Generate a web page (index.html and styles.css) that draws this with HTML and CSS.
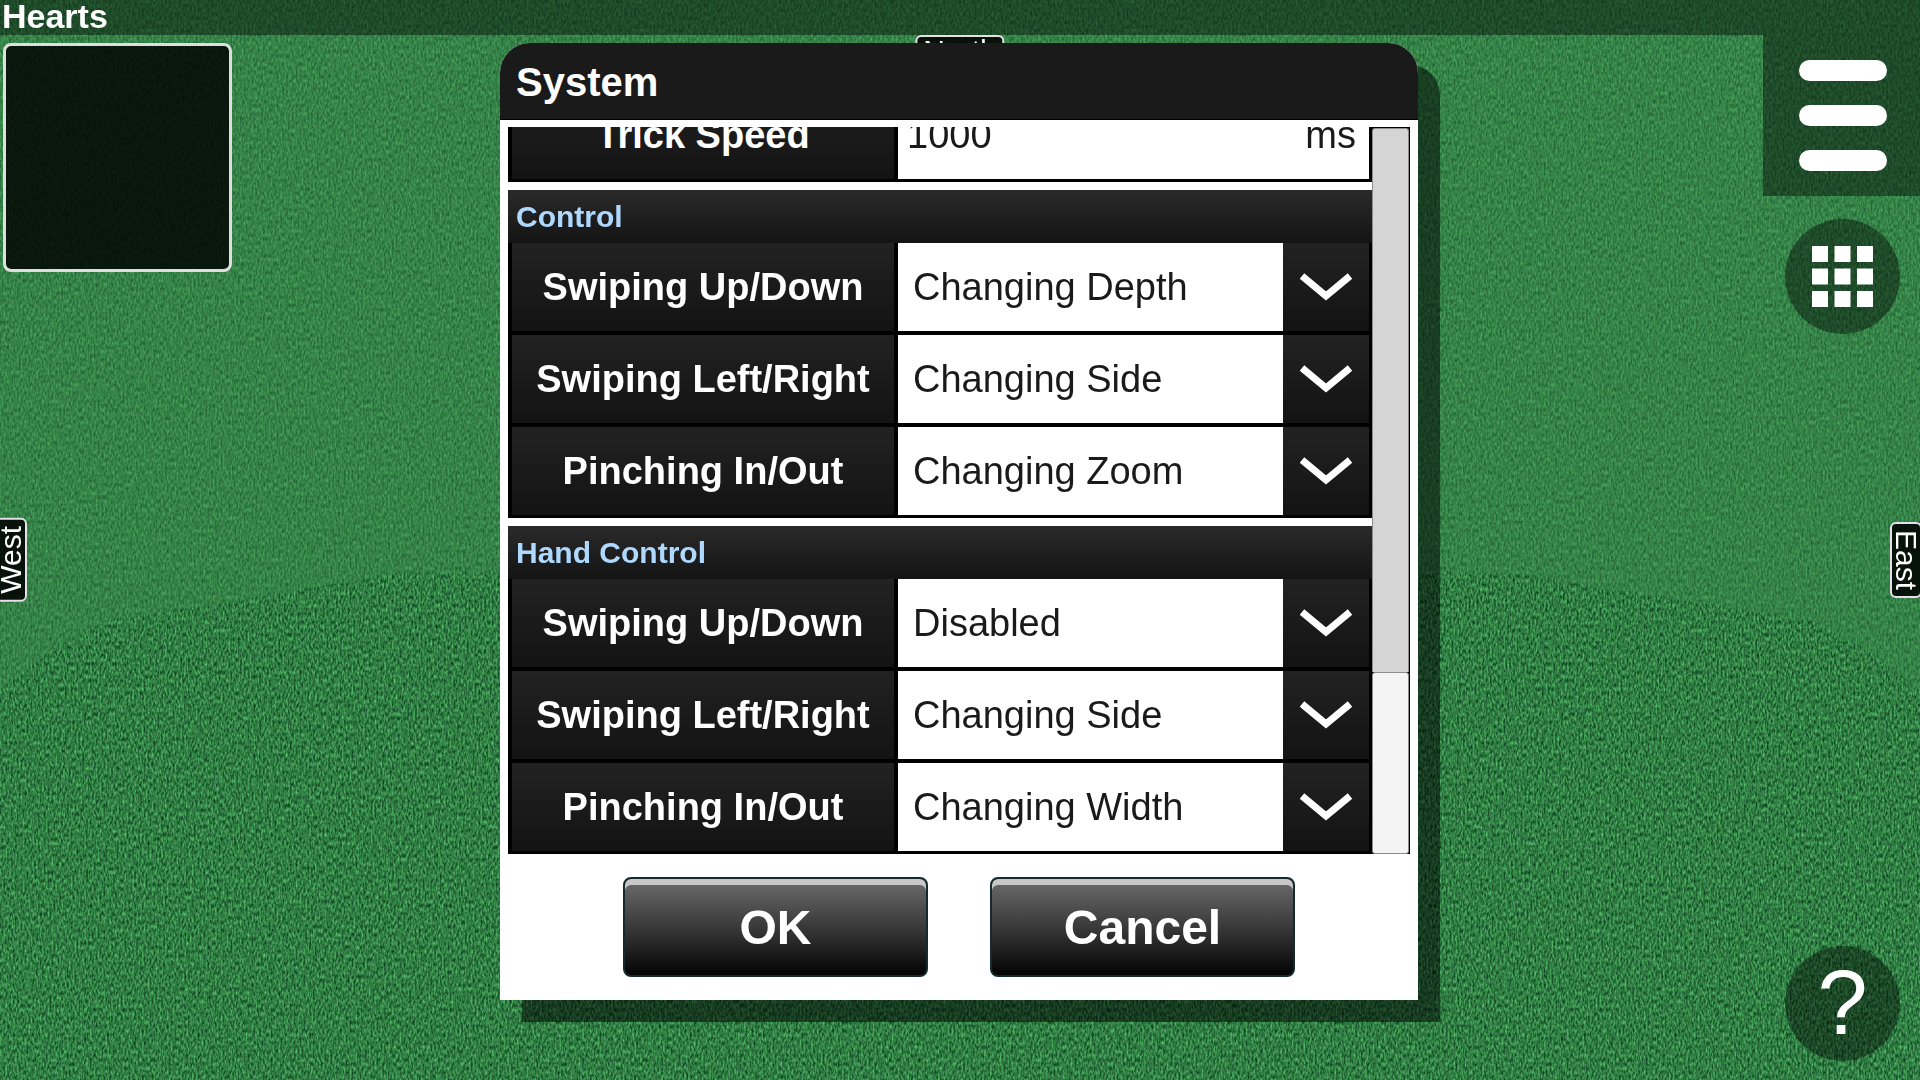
FILE: index.html
```html
<!DOCTYPE html>
<html lang="en">

<head>
    <meta charset="UTF-8">
    <meta name="viewport" content="width=device-width, initial-scale=1.0">
    <title>Hearts</title>
    <link rel="stylesheet" href="styles.css">
</head>

<body>
    <!-- felt -->
    <svg class="felt" viewBox="0 0 1920 1080" preserveAspectRatio="none" aria-hidden="true">
        <defs>
            <filter id="cloth" x="0" y="0" width="100%" height="100%" color-interpolation-filters="sRGB">
                <feTurbulence type="fractalNoise" baseFrequency="0.52 0.24" numOctaves="2" seed="4" />
                <feColorMatrix values="0.45 0 0 0 -0.035  0.75 0 0 0 0.115  0.45 0 0 0 0.04  0 0 0 0 1" />
            </filter>
        </defs>
        <rect width="1920" height="1080" filter="url(#cloth)" />
        <!-- far side of the cloth, paler and smoother -->
        <path fill="#3b8a4d" fill-opacity="0.45" d="M0 0H1920V690L1865 648L1810 620L1720 607L1620 590L1510 573L1400 572H500L400 573L300 590L200 607L110 620L55 648L0 690Z" />
    </svg>

    <header class="topbar">
        <h1>Hearts</h1>
    </header>

    <main class="table">
        <div class="trick-box"></div>
        <nav class="side">
            <button class="menu-btn" type="button" aria-label="Menu">
                <svg width="88" height="111" viewBox="0 0 88 111" fill="#fff">
                    <rect y="0" width="88" height="21" rx="10.5" />
                    <rect y="45" width="88" height="21" rx="10.5" />
                    <rect y="90" width="88" height="21" rx="10.5" />
                </svg>
            </button>
            <button class="round-btn" type="button" aria-label="Grid">
                <svg width="61" height="61" viewBox="0 0 61 61" fill="#fff">
                    <path d="M0 0h16v16H0zM22.500 0h16v16h-16zM45 0h16v16H45zM0 22.500h16v16H0zM22.500 22.500h16v16h-16zM45 22.500h16v16H45zM0 45h16v16H0zM22.500 45h16v16h-16zM45 45h16v16H45z" />
                </svg>
            </button>
            <button class="round-btn help" type="button">?</button>
        </nav>
    </main>

    <div class="seat north">North</div>
    <div class="seat west">West</div>
    <div class="seat east">East</div>

    <div class="overlay">
        <form class="dialog">
            <h2>System</h2>
            <div class="scroll">
                <div class="list">
                    <section>
                        <div class="row">
                            <label for="trick">Trick Speed</label>
                            <div class="number">
                                <input id="trick" type="text" value="1000">
                                <span>ms</span>
                            </div>
                        </div>
                    </section>

                    <section>
                        <h3>Control</h3>
                        <div class="row">
                            <label for="c-updown">Swiping Up/Down</label>
                            <div class="select">
                                <select id="c-updown"><option>Changing Depth</option></select>
                                <svg viewBox="0 0 86 88"><path d="M19 33L43 53L67 33" /></svg>
                            </div>
                        </div>
                        <div class="row">
                            <label for="c-leftright">Swiping Left/Right</label>
                            <div class="select">
                                <select id="c-leftright"><option>Changing Side</option></select>
                                <svg viewBox="0 0 86 88"><path d="M19 33L43 53L67 33" /></svg>
                            </div>
                        </div>
                        <div class="row">
                            <label for="c-pinch">Pinching In/Out</label>
                            <div class="select">
                                <select id="c-pinch"><option>Changing Zoom</option></select>
                                <svg viewBox="0 0 86 88"><path d="M19 33L43 53L67 33" /></svg>
                            </div>
                        </div>
                    </section>

                    <section>
                        <h3>Hand Control</h3>
                        <div class="row">
                            <label for="h-updown">Swiping Up/Down</label>
                            <div class="select">
                                <select id="h-updown"><option>Disabled</option></select>
                                <svg viewBox="0 0 86 88"><path d="M19 33L43 53L67 33" /></svg>
                            </div>
                        </div>
                        <div class="row">
                            <label for="h-leftright">Swiping Left/Right</label>
                            <div class="select">
                                <select id="h-leftright"><option>Changing Side</option></select>
                                <svg viewBox="0 0 86 88"><path d="M19 33L43 53L67 33" /></svg>
                            </div>
                        </div>
                        <div class="row">
                            <label for="h-pinch">Pinching In/Out</label>
                            <div class="select">
                                <select id="h-pinch"><option>Changing Width</option></select>
                                <svg viewBox="0 0 86 88"><path d="M19 33L43 53L67 33" /></svg>
                            </div>
                        </div>
                    </section>
                </div>
                <div class="scrollbar">
                    <div class="track"></div>
                    <div class="thumb"></div>
                </div>
            </div>
            <div class="buttons">
                <button type="button">OK</button>
                <button type="button">Cancel</button>
            </div>
        </form>
    </div>
</body>

</html>
```

FILE: styles.css
```css
* {
    box-sizing: border-box;
}

body {
    margin: 0;
    height: 100vh;
    display: flex;
    flex-direction: column;
    overflow: hidden;
    background-color: #2f7d44;
    color: #fff;
    font-family: "Liberation Sans", Arial, sans-serif;
}

h1,
h2,
h3 {
    margin: 0;
}

button {
    border: 0;
    padding: 0;
    color: #fff;
    font-family: inherit;
    cursor: pointer;
}

.felt {
    position: fixed;
    top: 0;
    left: 0;
    width: 100%;
    height: 100%;
    z-index: -1;
}

.topbar {
    height: 35px;
    padding-left: 2px;
    background-color: rgba(0, 0, 0, 0.42);
}

.topbar h1 {
    font-size: 34px;
    line-height: 32px;
}

.table {
    flex: 1;
    display: flex;
    justify-content: space-between;
}

.trick-box {
    width: 229px;
    height: 229px;
    margin: 8px 3px;
    border: 3px solid #dedede;
    border-radius: 8px;
    background-color: rgba(0, 0, 0, 0.82);
    background-clip: padding-box;
}

.side {
    display: flex;
    flex-direction: column;
    align-items: flex-end;
}

.menu-btn {
    width: 157px;
    height: 161px;
    padding-left: 3px;
    background-color: rgba(0, 0, 0, 0.42);
}

.menu-btn svg,
.round-btn svg {
    display: block;
    margin: 0 auto;
}

.round-btn {
    width: 115px;
    height: 115px;
    margin: 23px 20px 0;
    border-radius: 50%;
    background-color: rgba(0, 0, 0, 0.42);
}

.help {
    margin: auto 20px 19px;
    font-size: 90px;
    line-height: 115px;
}

/* player names round the table */
.seat {
    position: absolute;
    padding: 0 6px;
    border: 2px solid #e8e0e8;
    border-radius: 6px;
    background-color: rgba(0, 0, 0, 0.86);
    font-size: 30px;
    line-height: 28px;
}

.north {
    top: 35px;
    left: 50%;
    transform: translateX(-50%);
}

.west,
.east {
    writing-mode: vertical-rl;
    padding: 6px 0;
}

.west {
    top: 518px;
    left: -5px;
    transform: rotate(180deg);
}

.east {
    top: 522px;
    right: -2px;
}

.overlay {
    position: absolute;
    top: 0;
    left: 0;
    width: 100%;
    padding: 43px 2px 0 0;
}

.dialog {
    width: min(918px, 100%);
    margin: 0 auto;
    border-radius: 30px 30px 0 0;
    background-color: #fff;
    box-shadow: 22px 22px 0 rgba(0, 0, 0, 0.52);
}

.dialog h2 {
    height: 77px;
    padding-left: 16px;
    border-bottom: 1px solid #000;
    border-radius: 30px 30px 0 0;
    background-color: #1a1a1a;
    font-size: 40px;
    line-height: 79px;
}

.scroll {
    display: flex;
    height: calc(100vh - 353px);
    margin: 7px 8px 0;
}

/* scrolled to the end */
.list {
    flex: 1;
    display: flex;
    flex-direction: column;
    justify-content: flex-end;
    gap: 8px;
    overflow: hidden;
}

section {
    flex-shrink: 0;
    border-bottom: 3px solid #000;
}

h3 {
    height: 53px;
    padding-left: 8px;
    background-image: linear-gradient(#2a2a2a, #141414);
    color: #afd8ff;
    font-size: 30px;
    line-height: 53px;
}

.row {
    display: grid;
    grid-template-columns: 382fr 471fr;
    column-gap: 4px;
    height: 88px;
    padding: 0 3px 0 4px;
    background-color: #000;
    font-size: 38px;
    line-height: 88px;
}

.row + .row {
    height: 92px;
    border-top: 4px solid #000;
}

.row label {
    background-image: linear-gradient(#222, #131313);
    font-weight: bold;
    text-align: center;
    white-space: nowrap;
}

.number {
    display: flex;
    min-width: 0;
    padding: 0 13px 0 9px;
    background-color: #fff;
    color: #1a1a1a;
}

.number input {
    flex: 1;
    min-width: 0;
    padding: 0;
    border: 0;
    background: none;
    color: inherit;
    font: inherit;
}

.select {
    position: relative;
    min-width: 0;
}

.select select {
    appearance: none;
    display: block;
    width: 100%;
    height: 88px;
    padding: 0 86px 0 15px;
    border: 0;
    border-radius: 0;
    background-color: #fff;
    color: #1a1a1a;
    font: inherit;
}

.select svg {
    position: absolute;
    top: 0;
    right: 0;
    width: 86px;
    height: 88px;
    background-image: linear-gradient(#222, #131313);
    fill: none;
    stroke: #fff;
    stroke-width: 7;
    pointer-events: none;
}

.scrollbar {
    display: flex;
    flex-direction: column;
    width: 38px;
    border-top: 1px solid #000;
    border-right: 1px solid #000;
    background-color: #000;
}

.track,
.thumb {
    border: 1px solid #8c8c8c;
    border-radius: 3px;
}

.track {
    flex: 546;
    border-bottom: 0;
    border-radius: 3px 3px 0 0;
    background-color: #d5d5d5;
}

.thumb {
    flex: 181;
    background-color: #f4f4f4;
}

.buttons {
    display: flex;
    justify-content: center;
    gap: 62px;
    padding: 23px 0;
}

.buttons button {
    width: 305px;
    height: 100px;
    border: 2px solid #152a2b;
    border-radius: 8px;
    background-image: linear-gradient(#6c6c6c, #343434 55%, #030303);
    box-shadow: inset 0 6px 0 #c8c8c8;
    font-size: 48px;
    font-weight: bold;
}
```
